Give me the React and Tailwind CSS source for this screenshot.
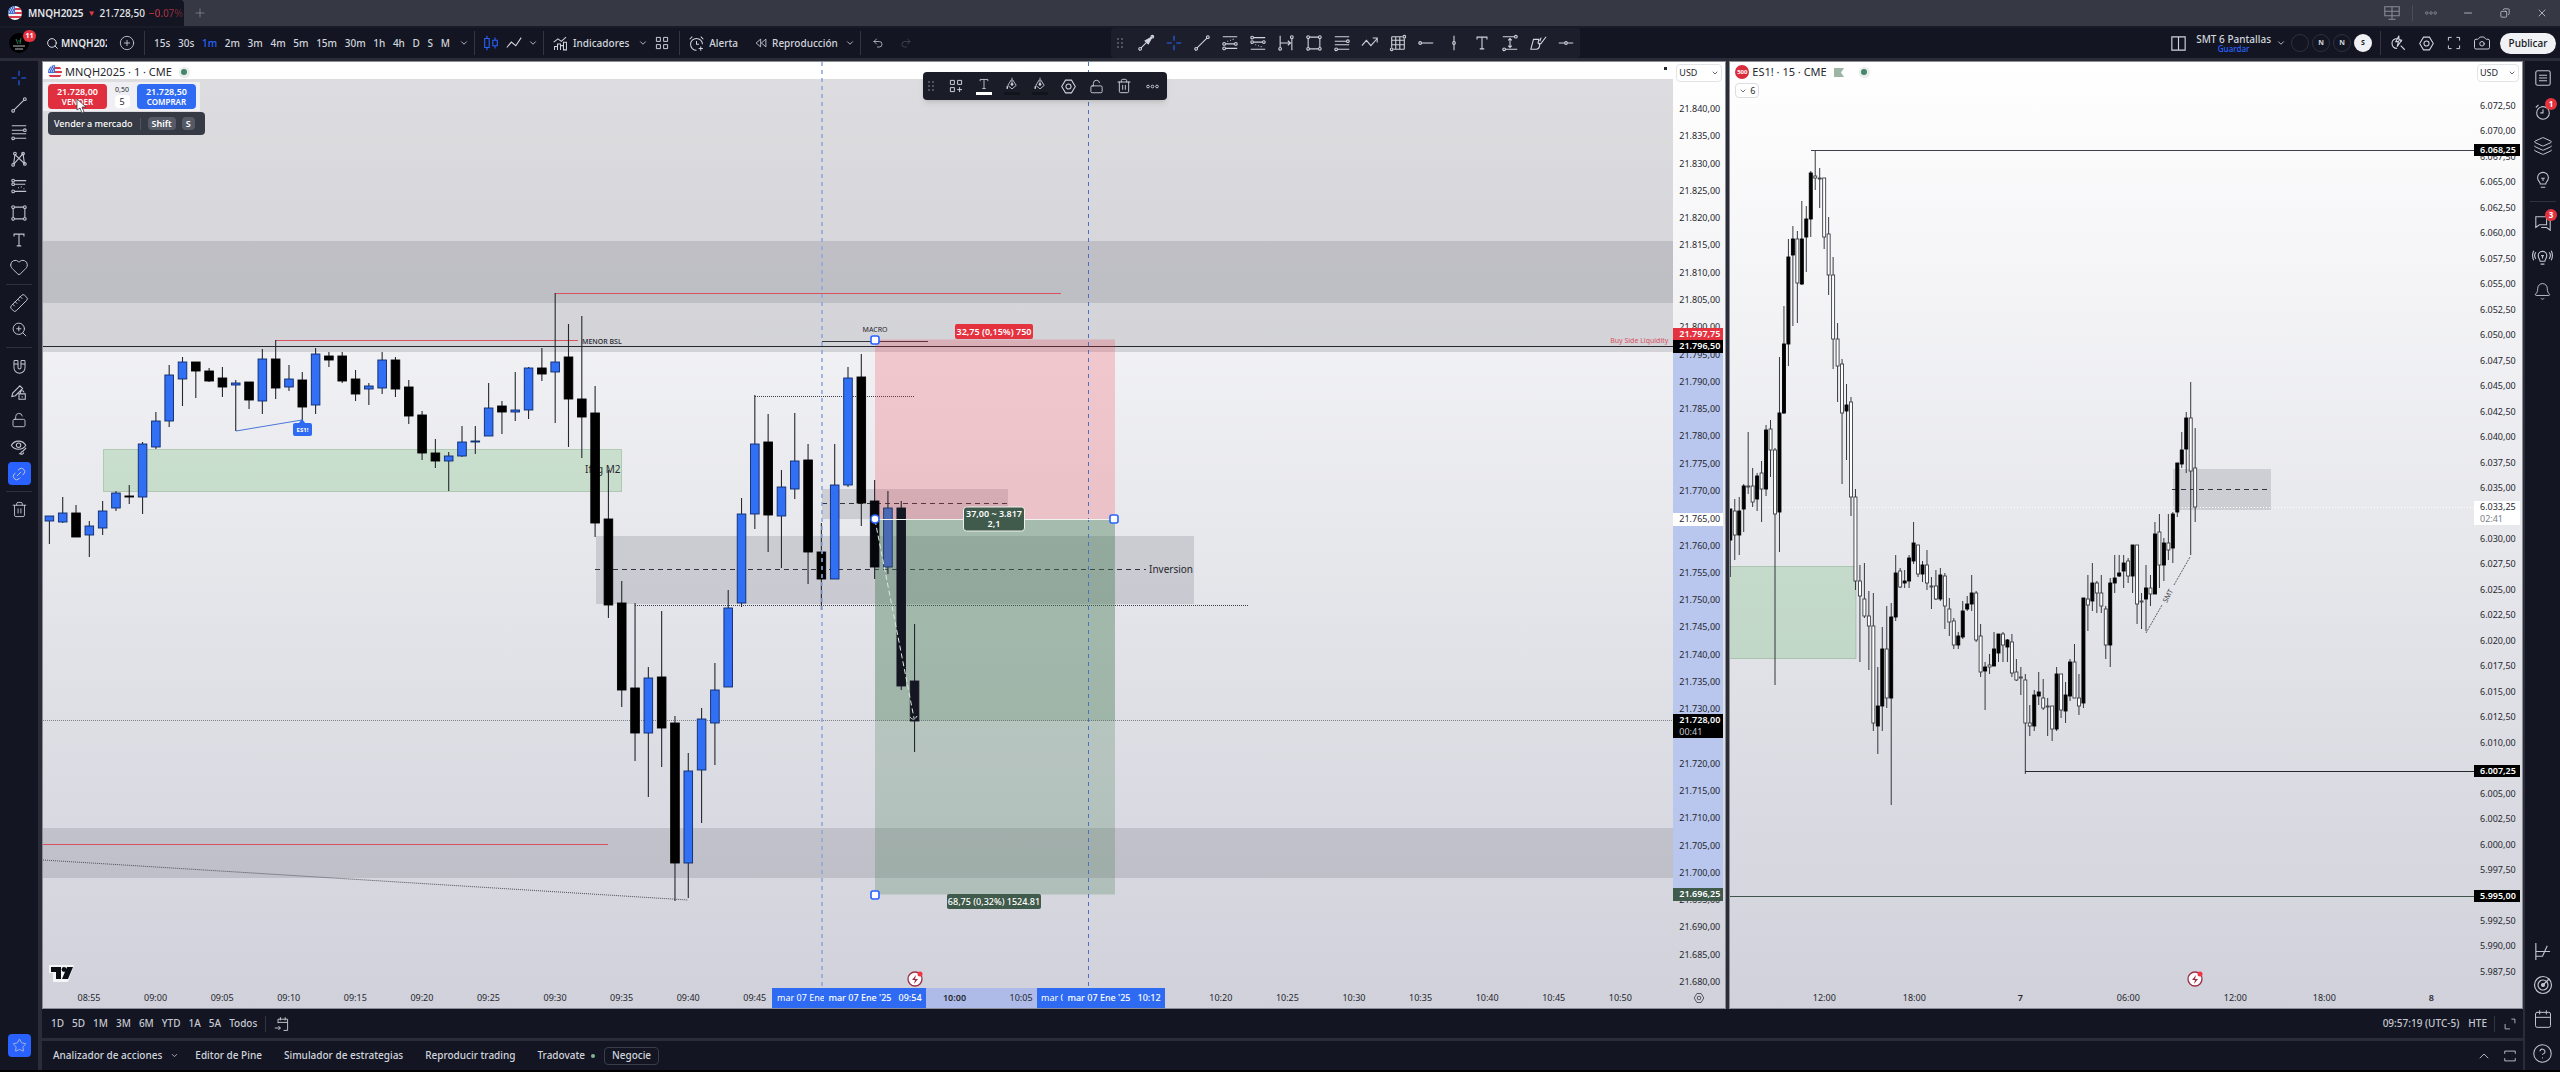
import React from "react";
import {
  Bell,
  Calendar,
  Camera,
  ChevronDown,
  ChevronUp,
  CircleHelp,
  CirclePlus,
  Copy,
  Heart,
  Layers,
  Link2,
  LockOpen,
  Magnet,
  Minus,
  Plus,
  Redo2,
  Ruler,
  Search,
  Star,
  Trash2,
  Undo2,
  X,
  ZoomIn,
} from "lucide-react";

// [direction, high, body top, body bottom, low]
const NQ_CANDLES = [
  ["u", 516, 516, 521, 544], ["u", 497, 513, 522, 523], ["d", 505, 513, 537, 537], ["u", 521, 526, 535, 557],
  ["u", 501, 511, 528, 535], ["u", 491, 493, 508, 511], ["d", 485, 496, 497, 504], ["u", 442, 444, 497, 514],
  ["u", 412, 421, 447, 449], ["u", 365, 375, 421, 427], ["u", 357, 362, 379, 406], ["d", 362, 362, 371, 398],
  ["d", 368, 371, 381, 382], ["d", 367, 378, 387, 397], ["u", 380, 383, 385, 431], ["d", 382, 382, 400, 409],
  ["u", 349, 359, 401, 414], ["d", 340, 359, 388, 399], ["u", 365, 379, 387, 391], ["d", 372, 380, 407, 420],
  ["u", 348, 354, 405, 414], ["d", 352, 356, 360, 367], ["d", 352, 356, 381, 383], ["d", 370, 379, 394, 401],
  ["u", 383, 386, 389, 405], ["u", 352, 360, 388, 394], ["d", 357, 360, 389, 397], ["d", 380, 387, 416, 424],
  ["d", 411, 415, 453, 460], ["d", 439, 453, 461, 468], ["u", 452, 456, 461, 491], ["u", 426, 442, 456, 457],
  ["u", 426, 441, 442, 454], ["u", 383, 408, 436, 436], ["d", 401, 406, 412, 434], ["u", 372, 410, 412, 421],
  ["u", 367, 368, 410, 419], ["d", 348, 368, 374, 381], ["u", 293, 362, 372, 423], ["d", 324, 357, 399, 447],
  ["d", 316, 399, 417, 458], ["d", 386, 413, 523, 537], ["d", 470, 519, 605, 618], ["d", 581, 603, 690, 707],
  ["d", 603, 688, 733, 761], ["u", 667, 678, 733, 797], ["d", 611, 677, 728, 767], ["d", 716, 723, 863, 901],
  ["u", 753, 771, 863, 898], ["u", 708, 719, 770, 823], ["u", 663, 690, 723, 765], ["u", 590, 608, 687, 687],
  ["u", 498, 514, 603, 607], ["u", 395, 444, 514, 529], ["d", 414, 442, 515, 552], ["u", 470, 487, 516, 568],
  ["u", 413, 461, 489, 499], ["d", 444, 460, 552, 584], ["d", 523, 552, 579, 610], ["u", 444, 485, 579, 579],
  ["u", 367, 378, 485, 487], ["d", 354, 377, 503, 526], ["d", 480, 501, 567, 579], ["u", 491, 508, 567, 574],
  ["d", 501, 508, 686, 690], ["d", 624, 681, 721, 752],
];

const ES_CANDLES = [
  ["u", 509, 509, 540, 577], ["d", 499, 511, 535, 560], ["u", 497, 511, 535, 555], ["u", 484, 486, 509, 532],
  ["d", 432, 486, 487, 494], ["d", 468, 486, 502, 507], ["u", 473, 476, 499, 511], ["d", 461, 473, 489, 522],
  ["u", 425, 430, 489, 496], ["d", 420, 429, 450, 477], ["d", 448, 450, 514, 685], ["u", 357, 413, 512, 552],
  ["u", 306, 344, 413, 414], ["u", 239, 257, 344, 366], ["u", 226, 239, 255, 326], ["d", 231, 239, 283, 323],
  ["u", 201, 239, 284, 285], ["u", 206, 219, 237, 272], ["u", 171, 173, 219, 237], ["d", 151, 176, 178, 190],
  ["d", 168, 178, 179, 208], ["d", 178, 178, 237, 249], ["d", 217, 234, 275, 295], ["d", 257, 275, 339, 369],
  ["d", 323, 339, 366, 402], ["d", 359, 364, 413, 484], ["u", 384, 405, 411, 460], ["d", 397, 402, 497, 516],
  ["d", 489, 497, 581, 590], ["d", 565, 581, 596, 662], ["d", 563, 599, 616, 618], ["d", 591, 616, 626, 670],
  ["d", 593, 626, 723, 731], ["u", 667, 706, 726, 754], ["u", 627, 649, 706, 731], ["d", 606, 649, 698, 708],
  ["u", 603, 617, 698, 805], ["u", 555, 573, 617, 621], ["d", 568, 571, 587, 588], ["u", 570, 581, 583, 588],
  ["u", 555, 558, 581, 588], ["u", 522, 543, 561, 564], ["d", 545, 545, 574, 577], ["u", 561, 565, 574, 582],
  ["d", 550, 565, 583, 590], ["d", 577, 586, 587, 609], ["d", 570, 586, 599, 600], ["u", 568, 575, 599, 601],
  ["d", 573, 576, 606, 629], ["d", 598, 609, 622, 636], ["d", 618, 621, 645, 649], ["u", 632, 636, 645, 649],
  ["u", 601, 611, 637, 639], ["u", 596, 604, 609, 611], ["u", 575, 593, 604, 611], ["d", 591, 593, 640, 642],
  ["d", 624, 636, 672, 677], ["u", 662, 667, 671, 710], ["d", 654, 665, 667, 674], ["u", 632, 649, 666, 666],
  ["u", 634, 634, 653, 662], ["d", 632, 634, 645, 662], ["u", 639, 640, 647, 662], ["d", 634, 642, 673, 677],
  ["d", 659, 672, 680, 681], ["d", 667, 677, 678, 695], ["d", 674, 680, 723, 774], ["d", 705, 723, 726, 736],
  ["u", 690, 695, 726, 731], ["u", 672, 692, 696, 705], ["d", 679, 698, 708, 710], ["d", 698, 706, 707, 736],
  ["d", 706, 706, 729, 741], ["u", 667, 674, 729, 731], ["d", 674, 674, 710, 718], ["u", 682, 695, 711, 723],
  ["u", 659, 662, 696, 701], ["d", 644, 662, 698, 698], ["d", 674, 698, 706, 715], ["u", 598, 598, 703, 708],
  ["d", 575, 599, 605, 631], ["u", 563, 583, 601, 611], ["d", 581, 583, 593, 613], ["d", 575, 593, 606, 613],
  ["d", 606, 609, 645, 659], ["u", 578, 583, 645, 667], ["u", 555, 578, 583, 593], ["u", 555, 573, 576, 577],
  ["u", 555, 563, 571, 588], ["d", 558, 561, 576, 583], ["u", 545, 545, 576, 593], ["d", 545, 545, 604, 624],
  ["d", 593, 601, 602, 629], ["u", 565, 588, 599, 631], ["d", 575, 588, 594, 606], ["u", 522, 534, 594, 594],
  ["d", 514, 532, 565, 588], ["u", 538, 543, 565, 581], ["d", 514, 543, 550, 560], ["u", 512, 514, 548, 563],
  ["u", 463, 463, 512, 517], ["u", 432, 450, 464, 468], ["u", 412, 418, 449, 473], ["d", 382, 418, 471, 555],
  ["d", 428, 468, 507, 522],
];

const TIMEFRAMES = ["15s", "30s", "1m", "2m", "3m", "4m", "5m", "15m", "30m", "1h", "4h", "D", "S", "M"];
const RANGES = ["1D", "5D", "1M", "3M", "6M", "YTD", "1A", "5A", "Todos"];

const formatPrice = (value) => {
  const [whole, cents] = value.toFixed(2).split(".");
  return `${whole.slice(0, -3)}.${whole.slice(-3)},${cents}`;
};

const NQ_PRICES = Array.from({ length: 33 }, (_, i) => formatPrice(21840 - i * 5));
const ES_PRICES = Array.from({ length: 35 }, (_, i) => formatPrice(6072.5 - i * 2.5));
const NQ_TIMES = Array.from({ length: 24 }, (_, i) => {
  const minutes = 8 * 60 + 55 + i * 5;
  return `${String(Math.floor(minutes / 60)).padStart(2, "0")}:${String(minutes % 60).padStart(2, "0")}`;
});

// Scale labels that give way to a tag keep their slot but stay empty
const TAGGED = ["21.765,00", "21.725,00", "6.032,50", "6.007,50", "5.995,00", "09:50", "09:55", "10:10", "10:15"];

// Drawing-tool glyphs on a 20x20 grid
const GLYPHS = {
  cross: <path d="M10 2v5.500M10 12.500V18M2 10h5.500M12.500 10H18" />,
  trend: <><path d="M4.500 15.500 15.500 4.500" /><circle cx="3.500" cy="16.500" r="1.500" /><circle cx="16.500" cy="3.500" r="1.500" /></>,
  arrow: <><path d="M4.500 15.500 12 8" /><circle cx="3.500" cy="16.500" r="1.500" /><path d="M17 3 9 7.500l3.500 3.500z" fill="currentColor" /><circle cx="17" cy="3" r="1.500" /></>,
  fib: <><path d="M2 3h16M2 8h13M2 12h16M5 17h13" /><circle cx="16.500" cy="8" r="1.500" /><circle cx="3.500" cy="17" r="1.500" /></>,
  pattern: <><path d="m4 16 1.500-11L16 15 14.500 4 4 16" /><circle cx="3.500" cy="16.500" r="1.500" /><circle cx="5.500" cy="4" r="1.500" /><circle cx="14.500" cy="4" r="1.500" /><circle cx="16.500" cy="15.500" r="1.500" /></>,
  forecast: <><path d="M5 4h13M5 8h12M5 16h13" /><path d="M9 12h1M12 11h1M15 13h1" /><circle cx="3.500" cy="4" r="1.500" /><circle cx="3.500" cy="8" r="1.500" /><circle cx="3.500" cy="16" r="1.500" /></>,
  longPos: <><path d="M2 3h16M5 11h10M5 16h13" /><path d="M7 8h1M10 7h1M13 6h1" /><circle cx="3.500" cy="11" r="1.500" /><circle cx="16.500" cy="11" r="1.500" /><circle cx="3.500" cy="16" r="1.500" /></>,
  shortPos: <><path d="M5 4h13M5 9h10M2 17h16" /><path d="M7 12h1M10 13h1M13 14h1" /><circle cx="3.500" cy="4" r="1.500" /><circle cx="3.500" cy="9" r="1.500" /><circle cx="16.500" cy="9" r="1.500" /></>,
  rect: <><path d="M5 3.500h10M5 16.500h10M3.500 5v10M16.500 5v10" /><circle cx="3.500" cy="3.500" r="1.500" /><circle cx="16.500" cy="3.500" r="1.500" /><circle cx="3.500" cy="16.500" r="1.500" /><circle cx="16.500" cy="16.500" r="1.500" /></>,
  text: <path d="M4.500 6V3.500h11V6M10 3.500v13M7.500 16.500h5" />,
  range: <><path d="M3.500 2v13M16.500 5v13M4 10h11M12 7.500l3 2.500-3 2.500" /><circle cx="3.500" cy="16.500" r="1.500" /><circle cx="16.500" cy="3.500" r="1.500" /></>,
  zigzag: <path d="m1 13 5-6 5 6 7-8M13 4.500h5v5" />,
  grid: <><path d="M3 3h12M3 7h14M3 12h14M5 17h12M3 3v12M7.500 3v14M12 3v14M17 5v12" /><circle cx="17" cy="3" r="1.500" /><circle cx="3" cy="17" r="1.500" /></>,
  ray: <><path d="M5 10h13" /><circle cx="3.500" cy="10" r="1.500" /></>,
  vline: <><path d="M10 2v6.500M10 11.500V18" /><circle cx="10" cy="10" r="1.500" /></>,
  hline: <><path d="M2 10h6.500M11.500 10H18" /><circle cx="10" cy="10" r="1.500" /></>,
  priceRange: <><path d="M2 3h13M5 17h13M10 5v10M8 7l2-2 2 2M8 13l2 2 2-2" /><circle cx="16.500" cy="3" r="1.500" /><circle cx="3.500" cy="17" r="1.500" /></>,
  brush: <path d="M2 17 5 6h6l-1 4c3 1 2 7-2 7zM10 10l3 1 6-8M12 8l1.500-4" />,
  candles: <path d="M5.500 2v3M5.500 15v3M3 5h5v10H3zM14.500 4v3M14.500 13v3M12 7h5v6h-5z" />,
  line: <path d="m2 15 5-6 5 4 6-9" />,
  indicators: <path d="M3 17.500v-4h3.500v4M6.500 17.500v-7H10v7M10 17.500v-5h3.500v5M13.500 17.500v-9H17v9zM2 8.500l5-4 4 3 5.500-5" />,
  squares: <path d="M3 3h5v5H3zM12 3h5v5h-5zM3 12h5v5H3zM12 12h5v5h-5z" />,
  template: <path d="M3 3h5v5H3zM12 3h5v5h-5zM3 12h5v5H3zM14.500 11.500v6M11.500 14.500h6" />,
  alert: <path d="M17 11a7 7 0 1 0-7 7M10 7v4h3M2 5l3-3M15 2l3 3M15 13.500v5M12.500 16h5" />,
  alarm: <><circle cx="10" cy="11" r="7" /><path d="M10 7v4H7M2 5l3-3M15 2l3 3" /></>,
  rewind: <path d="M9.500 4.500 3 10l6.500 5.500zM17 4.500 10.500 10l6.500 5.500z" />,
  layout: <path d="M3 3h14v14H3zM10 3v14" />,
  bolt: <path d="M9 16a5.500 5.500 0 1 1 5-7.500M13 13l4.500 4.500M11 2 7.500 8.500h3L9 14l5-7h-3z" />,
  hex: <><path d="M6.500 2.500h7L18 10l-4.500 7.500h-7L2 10z" /><circle cx="10" cy="10" r="3" /></>,
  full: <path d="M3 7V3h4M13 3h4v4M17 13v4h-4M7 17H3v-4" />,
  bucket: <><path d="M10 1v8M9 4 4 12l6 5 6-5-5-8" /><circle cx="10" cy="10.500" r="1.500" fill="currentColor" /><path d="m3.500 13-.5 4" strokeWidth="2" /></>,
  dots: <><circle cx="4" cy="10" r="1.800" /><circle cx="10" cy="10" r="1.800" /><circle cx="16" cy="10" r="1.800" /></>,
  pencilLock: <><path d="m2 14 1-4 8-8 3 3-8 8zM10 11h7v6h-7zM11.500 11V9.500a2 2 0 0 1 4 0" /><path d="M13.500 13.500v1.500" /></>,
  eye: <><path d="M1.500 8C5 2 14 2 17.500 8 14 14 5 14 1.500 8z" /><circle cx="9.500" cy="8" r="2.500" /><path d="m18 11-4 4M14 15c-2 0-1.500 2-3 2.500 2 1 4.500 0 4-1.500" /></>,
  list: <path d="M4 2h12a2 2 0 0 1 2 2v12a2 2 0 0 1-2 2H4a2 2 0 0 1-2-2V4a2 2 0 0 1 2-2zM5.500 7h9M5.500 10h9M5.500 13h9" />,
  bulb: <path d="M7 14.500C7 12 4 11.500 4 7.500a6 6 0 0 1 12 0c0 4-3 4.500-3 7zM7.500 18h5M8 8h4M10 8v3" />,
  stream: <path d="M7.500 14C7.500 12 5.500 11 5.500 8a4.500 4.500 0 0 1 9 0c0 3-2 4-2 6zM8 17h4M10 8v3M8.500 8h3M3 4.500c-1.500 2-1.500 5 0 7M17 4.500c1.500 2 1.500 5 0 7M.800 3c-1.500 3-1.500 7 0 10M19.200 3c1.500 3 1.500 7 0 10" />,
  chat: <path d="M2 3h12v9H6l-4 3zM16 7h2v11l-4-3H8" />,
  dom: <path d="M3 1v18M3 10h15M3 15h7l5-11" />,
  radar: <><circle cx="10" cy="10" r="8.500" /><circle cx="10" cy="10" r="5" /><circle cx="10" cy="10" r="1.500" fill="currentColor" /><path d="m10 10 6-6" /></>,
  goto: <path d="M5 9V4h12v14h-5M8 1.500v4M14 1.500v4M5 8h12M1 15h7M5.500 12.500 8 15l-2.500 2.500" />,
  corners: <path d="M3 10v7h7M12 3h5v6" />,
  panel: <path d="M2.500 7V3h15v4M2.500 13v4h15v-4" />,
  monitor: <path d="M2 3h16v10H2zM10 3v14M6 17h8M2 8h16" />,
};

function Glyph({ name, size = 18 }) {
  return (
    <svg
      width={size}
      height={size}
      viewBox="0 0 20 20"
      fill="none"
      stroke="currentColor"
      strokeWidth="1.2"
      className="shrink-0 overflow-visible"
    >
      {GLYPHS[name]}
    </svg>
  );
}

function IconButton({ label, className = "", children }) {
  return (
    <button aria-label={label} className={`flex shrink-0 items-center justify-center ${className}`}>
      {children}
    </button>
  );
}

function Divider({ className = "" }) {
  return <span className={`h-6 w-px shrink-0 bg-[#33363f] ${className}`} />;
}

function Grip() {
  return (
    <span className="grid shrink-0 grid-cols-2 gap-[2px]">
      {[0, 1, 2, 3, 4, 5].map((i) => (
        <i key={i} className="size-[2px] bg-[#50535e]" />
      ))}
    </span>
  );
}

function UsFlag({ size }) {
  return (
    <svg width={size} height={size} viewBox="0 0 14 14" className="shrink-0">
      <clipPath id="flag-clip"><circle cx="7" cy="7" r="7" /></clipPath>
      <g clipPath="url(#flag-clip)">
        <rect width="14" height="14" fill="#f3f4f8" />
        <path d="M7 2h7v2H7zM7 6h7v2H7zM0 10h14v2H0z" fill="#d9394b" />
        <rect width="7" height="8" fill="#3f6fd0" />
        <path d="M1 2h1M3 2h1M5 2h1M2 4h1M4 4h1M1 6h1M3 6h1M5 6h1" stroke="#fff" />
      </g>
    </svg>
  );
}

function WindowTabs() {
  return (
    <header className="flex h-[26px] shrink-0 items-center bg-[#363843] text-[#8a8d97]">
      <button className="flex h-full w-[184px] items-center gap-1 rounded-tr bg-[#131622] pl-2 text-[10px] font-medium whitespace-nowrap text-[#e4e5ea]">
        <UsFlag size={14} />
        <span className="ml-[2px] font-semibold">MNQH2025</span>
        <span className="text-[8px] text-[#e5394b]">▼</span>
        <span>21.728,50</span>
        <span className="bg-linear-to-r from-[#e5394b] to-[#5c2330] bg-clip-text text-transparent">−0.07%</span>
      </button>
      <IconButton label="Nueva pestaña" className="ml-2 size-4"><Plus size={14} strokeWidth={1.25} /></IconButton>
      <div className="ml-auto flex items-center pr-[10px]">
        <IconButton label="Pantallas" className="w-6"><Glyph name="monitor" /></IconButton>
        <span className="mx-2 h-4 w-px bg-[#4b4e59]" />
        <IconButton label="Menú" className="w-5"><Glyph name="dots" size={14} /></IconButton>
        <IconButton label="Minimizar" className="ml-2 w-[37px] text-[#d1d4dc]"><Minus size={12} strokeWidth={1.5} /></IconButton>
        <IconButton label="Restaurar" className="w-[38px] text-[#d1d4dc]"><Copy size={10} strokeWidth={1.75} className="-scale-x-100" /></IconButton>
        <IconButton label="Cerrar" className="ml-[10px] w-4 text-[#d1d4dc]"><X size={12} strokeWidth={1.5} /></IconButton>
      </div>
    </header>
  );
}

const DRAW_TOOLS = [
  "arrow", "cross", "trend", "longPos", "shortPos", "range", "rect", "fib",
  "zigzag", "grid", "ray", "vline", "text", "priceRange", "brush", "hline",
];

function TopToolbar() {
  return (
    <div className="flex h-[30px] shrink-0 items-center bg-[#131622] text-[10px] font-medium whitespace-nowrap text-[#d1d4dc]">
      <button aria-label="Perfil" className="relative ml-[9px] size-5 rounded-full bg-black">
        <svg viewBox="0 0 20 20" className="size-5">
          <path d="M7 6l2 5M12 5l-1 6M9 8h3" stroke="#2c7a57" fill="none" />
          <path d="M4 13h12M6 16h8" stroke="#b9bbc2" />
        </svg>
        <span className="absolute -top-[3px] left-[14px] flex h-3 w-[13px] items-center justify-center rounded-full bg-[#e5323f] text-[7px] font-bold text-white">11</span>
      </button>
      <button className="ml-[17px] flex w-[61px] items-center gap-[2px] overflow-hidden font-semibold text-[#e4e5ea]">
        <Search size={13} strokeWidth={1.75} className="shrink-0" />
        MNQH2025
      </button>
      <IconButton label="Comparar" className="ml-3 w-4"><CirclePlus size={16} strokeWidth={1.25} /></IconButton>
      <Divider className="mx-[9px]" />
      <div className="flex w-[296px] items-center justify-between">
        {TIMEFRAMES.map((t) => (
          <button key={t} className={t === "1m" ? "text-[#2962ff]" : ""}>{t}</button>
        ))}
      </div>
      <IconButton label="Más intervalos" className="ml-1 w-5"><ChevronDown size={10} /></IconButton>
      <Divider />
      <IconButton label="Velas" className="ml-[7px] w-[18px] text-[#2962ff]"><Glyph name="candles" /></IconButton>
      <IconButton label="Línea" className="ml-[5px] w-[18px]"><Glyph name="line" /></IconButton>
      <IconButton label="Tipos de gráfico" className="w-5"><ChevronDown size={10} /></IconButton>
      <Divider />
      <button className="ml-2 flex items-center gap-1"><Glyph name="indicators" size={17} />Indicadores</button>
      <IconButton label="Favoritos" className="ml-1 w-5"><ChevronDown size={10} /></IconButton>
      <IconButton label="Plantillas" className="w-[18px]"><Glyph name="squares" size={16} /></IconButton>
      <Divider className="mx-2" />
      <button className="flex items-center gap-1"><Glyph name="alert" size={17} />Alerta</button>
      <button className="ml-4 flex items-center gap-1"><Glyph name="rewind" size={14} />Reproducción</button>
      <IconButton label="Opciones de reproducción" className="ml-[2px] w-5"><ChevronDown size={10} /></IconButton>
      <Divider />
      <IconButton label="Deshacer" className="ml-[9px] w-4"><Undo2 size={12} strokeWidth={1.5} /></IconButton>
      <IconButton label="Rehacer" className="ml-3 w-4 text-[#4a4d58]"><Redo2 size={12} strokeWidth={1.5} /></IconButton>
      <div className="ml-[197px] flex h-full items-center rounded bg-[#1c1f2b] pl-1.5">
        <Grip />
        <div className="ml-[9px] flex">
          {DRAW_TOOLS.map((tool) => (
            <IconButton key={tool} label={tool} className={tool === "cross" ? "w-7 text-[#2962ff]" : "w-7"}>
              <Glyph name={tool} />
            </IconButton>
          ))}
        </div>
      </div>
      <div className="ml-auto flex items-center pr-1">
        <IconButton label="Disposición" className="w-5"><Glyph name="layout" size={19} /></IconButton>
        <button className="ml-2 flex flex-col items-center text-[10px] leading-[10px]">
          SMT 6 Pantallas
          <span className="text-[8px] leading-[9px] text-[#2962ff]">Guardar</span>
        </button>
        <IconButton label="Diseños" className="w-5"><ChevronDown size={10} /></IconButton>
        <div className="flex gap-[3px] text-[7px] font-bold">
          <span className="size-[18px] rounded-full border border-[#2e313c]" />
          <span className="flex size-[18px] items-center justify-center rounded-full border border-[#2e313c]">N</span>
          <span className="flex size-[18px] items-center justify-center rounded-full border border-[#2e313c]">N</span>
          <span className="flex size-[18px] items-center justify-center rounded-full bg-[#f0f1f4] text-[#131622]">S</span>
        </div>
        <Divider className="ml-2 mr-[3px]" />
        <IconButton label="Búsqueda rápida" className="w-7"><Glyph name="bolt" /></IconButton>
        <IconButton label="Configuración" className="w-7"><Glyph name="hex" size={17} /></IconButton>
        <IconButton label="Pantalla completa" className="w-7"><Glyph name="full" size={16} /></IconButton>
        <IconButton label="Captura" className="w-7"><Camera size={18} strokeWidth={1.25} /></IconButton>
        <button className="ml-1 h-[21px] w-14 rounded-full bg-[#f0f1f4] text-[#131622]">Publicar</button>
      </div>
    </div>
  );
}

function Separator() {
  return <span className="my-1 h-px w-[26px] shrink-0 bg-[#2f323d]" />;
}

function LeftSidebar() {
  const tool = "h-[27px] w-full";
  return (
    <nav className="flex w-[38px] shrink-0 flex-col items-center bg-[#131622] pt-[3px] text-[#c1c4cd]">
      <IconButton label="Cruz" className="h-[27px] w-full text-[#2962ff]"><Glyph name="cross" /></IconButton>
      {["trend", "fib", "pattern", "forecast", "rect", "text"].map((name) => (
        <IconButton key={name} label={name} className={tool}><Glyph name={name} /></IconButton>
      ))}
      <IconButton label="Iconos" className={tool}><Heart size={20} strokeWidth={1.2} /></IconButton>
      <Separator />
      <IconButton label="Medir" className={tool}><Ruler size={20} strokeWidth={1.2} className="-rotate-90" /></IconButton>
      <IconButton label="Acercar" className={tool}><ZoomIn size={17} strokeWidth={1.4} /></IconButton>
      <Separator />
      <IconButton label="Imán" className={tool}><Magnet size={17} strokeWidth={1.4} className="rotate-[135deg]" /></IconButton>
      <IconButton label="Modo de dibujo" className={tool}><Glyph name="pencilLock" /></IconButton>
      <IconButton label="Bloquear" className={tool}><LockOpen size={16} strokeWidth={1.4} /></IconButton>
      <IconButton label="Ocultar" className={tool}><Glyph name="eye" /></IconButton>
      <IconButton label="Sincronizar" className={tool}>
        <span className="flex size-[23px] items-center justify-center rounded bg-[#2962ff]">
          <Link2 size={16} strokeWidth={1.4} className="-rotate-45" />
        </span>
      </IconButton>
      <Separator />
      <IconButton label="Eliminar" className={tool}><Trash2 size={17} strokeWidth={1.3} /></IconButton>
      <IconButton label="Herramientas favoritas" className="mt-auto mb-[13px] size-[23px] rounded bg-[#2962ff]">
        <Star size={15} strokeWidth={1.3} />
      </IconButton>
    </nav>
  );
}

function Badge({ children }) {
  return (
    <span className="absolute top-[3px] right-[3px] flex size-3 items-center justify-center rounded-full bg-[#e5323f] text-[8px] font-bold text-white">
      {children}
    </span>
  );
}

function RightSidebar() {
  const item = "relative h-[34px] w-full";
  return (
    <nav className="flex w-[35px] shrink-0 flex-col items-center bg-[#131622] text-[#c1c4cd]">
      <IconButton label="Lista" className={item}><Glyph name="list" /></IconButton>
      <IconButton label="Alertas" className={item}><Glyph name="alarm" /><Badge>1</Badge></IconButton>
      <IconButton label="Árbol de objetos" className={item}><Layers size={20} strokeWidth={1.2} /></IconButton>
      <IconButton label="Ideas" className={item}><Glyph name="bulb" /></IconButton>
      <Separator />
      <IconButton label="Chats" className={item}><Glyph name="chat" /><Badge>3</Badge></IconButton>
      <IconButton label="Transmisiones" className={item}><Glyph name="stream" size={19} /></IconButton>
      <IconButton label="Notificaciones" className={item}><Bell size={19} strokeWidth={1.2} /></IconButton>
      <div className="mt-auto w-full">
        <IconButton label="DOM" className={item}><Glyph name="dom" size={19} /></IconButton>
        <IconButton label="Analizadores" className={item}><Glyph name="radar" size={20} /></IconButton>
        <IconButton label="Calendario" className={item}><Calendar size={20} strokeWidth={1.2} /></IconButton>
        <IconButton label="Ayuda" className={item}><CircleHelp size={21} strokeWidth={1.2} /></IconButton>
      </div>
    </nav>
  );
}

function Handle({ x, y, round }) {
  return <rect x={x - 4} y={y - 4} width="8" height="8" rx={round ? 4 : 2} fill="#fff" stroke="#2962ff" strokeWidth="1.6" />;
}

function EventMark({ x, y }) {
  return (
    <g>
      <circle cx={x} cy={y} r="7" fill="#fff" stroke="#9b2f45" strokeWidth="1.3" />
      <path d={`M${x + 1} ${y - 4}l-4 5h3l-1 4 4-5h-3z`} fill="#9b2f45" />
      <circle cx={x + 5} cy={y - 5} r="2.500" fill="#f23645" />
    </g>
  );
}

function NqCandle({ candle, index, up, upBorder, down }) {
  const [dir, high, top, bottom, low] = candle;
  const x = 49.4 + index * 13.31;
  return (
    <g>
      <path d={`M${x} ${high}V${low}`} stroke="#26282f" strokeWidth="1.1" />
      <rect
        x={x - 4.3}
        y={top}
        width="8.600"
        height={Math.max(bottom - top, 0.5)}
        fill={dir === "u" ? up : down}
        stroke={dir === "u" ? upBorder : down}
        strokeWidth="0.9"
      />
    </g>
  );
}

// Candles from this index on sit inside the short position
const POSITION_START = 62;

function NqCanvas() {
  const zone = "rgba(115,118,128,0.24)";
  return (
    <svg className="absolute inset-0 size-full">
      <g transform="translate(-43 -62)">
        <rect x="43" y="79" width="4000" height="273" fill={zone} />
        <rect x="43" y="241" width="4000" height="62" fill={zone} />
        <rect x="43" y="828" width="4000" height="50" fill={zone} />
        <rect x="103.500" y="449.500" width="518" height="42" fill="rgba(76,175,80,0.21)" stroke="rgba(76,140,80,0.3)" />
        <rect x="596" y="536" width="598" height="68" fill={zone} />
        <rect x="822" y="489" width="186" height="30" fill={zone} />
        <text x="585" y="473" fontSize="10" fill="#26282f">Ifvg M2</text>

        <path d="M555 293.500H1061M276 340.500H578M43 844.500H608" stroke="#d9515f" />
        <path d="M43 860 688 900" stroke="#4c4f57" strokeDasharray="1 1" />
        <path d="M755 396.500H915M635 605.500H1248" stroke="#3d4049" strokeDasharray="1 1" />
        <path d="M43 720.500H4000" stroke="#7d8088" strokeDasharray="1 1" />
        <path d="M43 346.500H4000" stroke="#26282f" strokeWidth="1.200" />
        <path d="M822 341.500H928" stroke="#32353f" />
        <path d="M236 431 302 420" stroke="#4a74d8" />
        <path d="M595 569.500H1146M822 503.500H1007" stroke="#32353f" strokeDasharray="5 4" />

        {NQ_CANDLES.slice(0, POSITION_START).map((candle, i) => (
          <NqCandle key={i} candle={candle} index={i} up="#3170f5" upBorder="#0e2a6b" down="#000" />
        ))}

        <path d="M302 419l4 5h-8z" fill="#2f6bf2" />
        <rect x="293" y="423" width="19" height="13" rx="2" fill="#2f6bf2" />
        <text x="302.500" y="432" fontSize="6" fontWeight="700" fill="#fff" textAnchor="middle">ES1!</text>
        <path d="M822 62V988" stroke="#8fa6dc" strokeWidth="1.600" strokeDasharray="4 4" />

        <rect x="875" y="339.500" width="240" height="180" fill="rgba(242,54,69,0.22)" />
        <rect x="875" y="519.500" width="240" height="375" fill="rgba(66,120,80,0.25)" />
        <rect x="875" y="519.500" width="240" height="201" fill="rgba(66,120,80,0.2)" />
        {NQ_CANDLES.slice(POSITION_START).map((candle, i) => (
          <NqCandle
            key={i}
            candle={candle}
            index={POSITION_START + i}
            up="#4a6ab5"
            upBorder="#1d3262"
            down={i === 0 ? "#06070c" : "#141722"}
          />
        ))}
        <path d="M1088.500 62V988" stroke="#4a6fc4" strokeDasharray="4 4" />
        <path d="M875 519.500H1114" stroke="#f0f2f0" strokeWidth="1.200" />
        <path d="M875 520 914 718" stroke="#dfe8e0" strokeDasharray="5 3" />
        <path d="M910 717c2 3 5 3 7-1" stroke="#dfe8e0" fill="none" />

        <text x="582" y="344" fontSize="7" fontWeight="500" fill="#26282f">MENOR BSL</text>
        <text x="875" y="332" fontSize="7" fill="#26282f" textAnchor="middle">MACRO</text>
        <text x="1149" y="573" fontSize="10" fill="#26282f">Inversion</text>

        <g fontSize="9" fontWeight="600" fill="#fff" textAnchor="middle">
          <rect x="955" y="324" width="78" height="15" rx="2" fill="#e5323f" />
          <text x="994" y="335">32,75 (0,15%) 750</text>
          <rect x="963.500" y="507" width="61" height="24" rx="3" fill="#405a4b" stroke="#eef2ef" />
          <text x="994" y="517">37,00 ~ 3.817</text>
          <text x="994" y="527">2,1</text>
          <rect x="947" y="894" width="94" height="15" rx="2" fill="#405a4b" />
          <text x="994" y="905" fontWeight="500">68,75 (0,32%) 1524.81</text>
        </g>

        <Handle x={875} y={340} />
        <Handle x={875} y={519} round />
        <Handle x={1114} y={519} />
        <Handle x={875} y={895} />
        <EventMark x={915} y={979} />

        <path d="M49 965h25l-6 17h-15v-9h-4z" fill="#f4f4f7" />
        <path d="M51 967h10v12h-5v-7h-5zM67 967h6l-5 12h-6z" fill="#0c0e15" />
        <circle cx="64" cy="969.500" r="2.400" fill="#0c0e15" />
      </g>
    </svg>
  );
}

function EsCanvas() {
  return (
    <svg className="absolute inset-0 size-full">
      <g transform="translate(-1730 -62)">
        <rect x="1729" y="566.500" width="127" height="92" fill="rgba(76,175,80,0.21)" stroke="rgba(76,140,80,0.3)" />
        <rect x="2173" y="469" width="98" height="41" fill="rgba(115,118,128,0.24)" />
        <path d="M2172 489.500H2268" stroke="#32353f" strokeDasharray="5 4" />
        <path d="M1729 507.500H4000" stroke="#fff" strokeDasharray="1 2" />
        <path d="M1811 150.500H4000" stroke="#3d4049" strokeWidth="1.200" />
        <path d="M2025 771.500H4000" stroke="#26282f" strokeWidth="1.200" />
        <path d="M1729 896.500H4000" stroke="#3f5348" strokeWidth="1.200" />
        {ES_CANDLES.map(([dir, high, top, bottom, low], i) => {
          const x = 1730.3 + i * 4.47;
          return (
            <g key={i} stroke="#22242b">
              <path d={`M${x} ${high}V${low}`} strokeWidth="0.900" />
              <rect
                x={x - 1.5}
                y={top}
                width="3"
                height={Math.max(bottom - top, 0.5)}
                fill={dir === "u" ? "#000" : "#fff"}
                stroke={dir === "u" ? "#000" : "#3a3c44"}
                strokeWidth="0.900"
              />
            </g>
          );
        })}
        <path d="M2146 633 2162 605M2174 585 2190 557" stroke="#5c5f68" strokeDasharray="2 1" />
        <text transform="translate(2170 597) rotate(-62)" fontSize="7" fill="#3a3d47" textAnchor="middle">SMT</text>
        <EventMark x={2195} y={979} />
      </g>
    </svg>
  );
}

function CurrencySelect({ id }) {
  return (
    <label htmlFor={id} className="relative mx-[3px] mt-[2px] block h-[18px] rounded-sm border border-[#e3e4e8] bg-white/70">
      <select id={id} aria-label="Moneda" className="h-full w-full appearance-none pl-[2px] text-[9px] leading-4 text-[#26282f]">
        <option>USD</option>
      </select>
      <ChevronDown size={8} className="absolute top-1 right-[2px] text-[#131622]" />
    </label>
  );
}

function PriceTag({ className, children }) {
  return (
    <span className={`absolute left-0 right-[2px] pl-1.5 text-[9px] leading-3 ${className}`}>{children}</span>
  );
}

function PriceScale({ prices }) {
  return prices.map((price) => (
    <span key={price} className="h-3">{TAGGED.includes(price) ? "" : price}</span>
  ));
}

function ChartTitle({ icon, children }) {
  return (
    <div className="flex h-5 items-center gap-[3px] text-[11px] text-[#26282f]">
      {icon}
      {children}
    </div>
  );
}

function StatusDot() {
  return (
    <span className="flex size-[11px] items-center justify-center rounded-full bg-[#e9eceb]">
      <i className="size-[6px] rounded-full bg-[#45866a]" />
    </span>
  );
}

function TradePanel() {
  return (
    <>
      <div className="flex h-[29px] w-[157px] items-center bg-[#f0f0f4] pl-[5px] text-center text-[9px] leading-[11px] font-semibold text-white">
        <button className="h-[25px] w-[59px] rounded bg-[#e0303f]">
          21.728,00
          <span className="block text-[8px] leading-[10px]">VENDER</span>
        </button>
        <div className="flex w-[30px] flex-col items-center text-[#26282f]">
          <span className="text-[7px] leading-[10px] font-normal">0,50</span>
          <input
            aria-label="Cantidad"
            defaultValue="5"
            className="h-[13px] w-[15px] rounded-sm bg-white text-center text-[9px] font-normal"
          />
        </div>
        <button className="h-[25px] w-[59px] rounded bg-[#2f6bf2]">
          21.728,50
          <span className="block text-[8px] leading-[10px]">COMPRAR</span>
        </button>
      </div>
      <svg width="12" height="16" viewBox="0 0 12 16" className="absolute top-[36px] left-[33px]">
        <path d="M1 1v11l3-2 2 5 2-1-2-5h4z" fill="#fff" stroke="#3a3d47" strokeWidth="0.800" />
      </svg>
      <div className="mt-px ml-[5px] flex h-[23px] w-[157px] items-center rounded bg-[#363a45] pl-1.5 text-[9px] font-medium whitespace-nowrap text-white">
        Vender a mercado
        <span className="mx-[7px] h-3 w-px bg-[#50535e]" />
        <kbd className="rounded-sm bg-[#565a66] px-1 font-sans text-[9px] leading-[13px] font-semibold">Shift</kbd>
        <kbd className="ml-1.5 rounded-sm bg-[#565a66] px-1 font-sans text-[9px] leading-[13px] font-semibold">S</kbd>
      </div>
    </>
  );
}

function SelectionToolbar() {
  return (
    <div className="absolute top-[10px] left-[880px] flex h-7 w-[244px] items-center rounded bg-[#1a1d28] pl-[5px] text-[#d1d4dc] shadow-md">
      <Grip />
      <div className="ml-2 flex">
        <IconButton label="Plantilla" className="w-7"><Glyph name="template" size={16} /></IconButton>
        <button aria-label="Color del texto" className="flex w-7 flex-col items-center gap-px">
          <Glyph name="text" size={14} />
          <i className="h-[3px] w-4 bg-white" />
        </button>
        <button aria-label="Color de beneficio" className="flex w-7 flex-col items-center gap-px">
          <Glyph name="bucket" size={14} />
          <i className="h-[3px] w-4 bg-[#12141b]" />
        </button>
        <button aria-label="Color de pérdida" className="flex w-7 flex-col items-center gap-px">
          <Glyph name="bucket" size={14} />
          <i className="h-[3px] w-4 bg-[#12141b]" />
        </button>
        <IconButton label="Ajustes" className="w-7"><Glyph name="hex" size={17} /></IconButton>
        <IconButton label="Bloquear" className="w-7"><LockOpen size={15} strokeWidth={1.4} /></IconButton>
        <IconButton label="Eliminar" className="w-7"><Trash2 size={16} strokeWidth={1.4} /></IconButton>
        <IconButton label="Más" className="w-7"><Glyph name="dots" size={15} /></IconButton>
      </div>
    </div>
  );
}

function NqChart() {
  return (
    <section className="flex min-w-0 flex-[17] border border-[#8b8d96] bg-linear-to-b from-white to-[#d0d1da]">
      <div className="flex min-w-0 flex-1 flex-col">
        <div className="relative flex-1 overflow-hidden">
          <NqCanvas />
          <div className="relative">
            <div className="pl-[5px]">
              <ChartTitle icon={<UsFlag size={14} />}>
                MNQH2025 · 1 · CME
                <span className="ml-1"><StatusDot /></span>
              </ChartTitle>
            </div>
            <TradePanel />
          </div>
          <SelectionToolbar />
          <i className="absolute top-[5px] right-[6px] size-[3px] bg-[#26282f]" />
        </div>
        <div className="relative flex h-5 shrink-0 items-center justify-between pr-[33px] pl-[26px] text-[9px] text-[#26282f]">
          <span className="absolute inset-y-0 left-[832px] w-[240px] bg-[#aebbe8]" />
          {NQ_TIMES.map((t) => (
            <span key={t} className={t === "10:00" ? "relative w-10 text-center font-semibold" : "relative w-10 text-center"}>
              {TAGGED.includes(t) ? "" : t}
            </span>
          ))}
          <span className="absolute inset-y-0 left-[729px] w-[52px] bg-[#2f6bf2] pl-[5px] leading-5 whitespace-nowrap text-white">mar 07 Ene</span>
          <span className="absolute inset-y-0 left-[781px] w-[102px] bg-[#2f6bf2] text-center font-medium leading-5 whitespace-pre text-white">mar 07 Ene '25   09:54</span>
          <span className="absolute inset-y-0 left-[994px] w-[27px] bg-[#2f6bf2] pl-1 leading-5 whitespace-nowrap text-white">mar 0</span>
          <span className="absolute inset-y-0 left-[1020px] w-[102px] bg-[#2f6bf2] text-center font-medium leading-5 whitespace-pre text-white">mar 07 Ene '25   10:12</span>
        </div>
      </div>
      <div className="relative flex w-[52px] shrink-0 flex-col text-[9px] leading-3 text-[#26282f]">
        <span className="absolute top-[291px] right-[2px] left-0 h-[541px] bg-[#b9c6ee]" />
        <CurrencySelect id="nq-currency" />
        <div className="relative mt-[21px] flex flex-1 flex-col justify-between pl-1.5">
          <PriceScale prices={NQ_PRICES} />
        </div>
        <IconButton label="Ajustes de escala" className="h-5 shrink-0"><Glyph name="hex" size={12} /></IconButton>
        <PriceTag className="top-[266px] bg-[#e5323f] font-semibold text-white">21.797,75</PriceTag>
        <PriceTag className="top-[278px] bg-black pb-px font-semibold text-white">21.796,50</PriceTag>
        <PriceTag className="top-[451px] bg-white pb-px">21.765,00</PriceTag>
        <PriceTag className="top-[652px] bg-black font-semibold text-white">
          21.728,00
          <span className="block font-normal text-[#c5c8d0]">00:41</span>
        </PriceTag>
        <PriceTag className="top-[826px] bg-[#405a4b] pb-px font-semibold text-white">21.696,25</PriceTag>
        <span className="absolute top-[279px] right-[57px] -translate-y-1/2 text-[7px] leading-3 whitespace-nowrap text-[#d9515f]">Buy Side Liquidity</span>
      </div>
    </section>
  );
}

function EsChart() {
  return (
    <section className="flex min-w-0 flex-[8] border border-[#8b8d96] bg-linear-to-b from-white to-[#d0d1da]">
      <div className="flex min-w-0 flex-1 flex-col">
        <div className="relative flex-1 overflow-hidden">
          <EsCanvas />
          <div className="relative pl-[5px]">
            <ChartTitle
              icon={<span className="flex size-[14px] items-center justify-center rounded-full bg-[#d92c3c] text-[6px] font-bold text-white">500</span>}
            >
              ES1! · 15 · CME
              <svg width="10" height="9" viewBox="0 0 10 9" className="ml-1">
                <path d="M0 0h10L7 4.500 10 9H0z" fill="#9db5a5" />
              </svg>
              <span className="ml-3"><StatusDot /></span>
            </ChartTitle>
            <button className="mt-px flex h-[15px] w-6 items-center justify-center gap-[3px] rounded-sm border border-[#dcdde2] bg-white text-[9px] text-[#26282f]">
              <ChevronDown size={8} />6
            </button>
          </div>
        </div>
        <div className="flex h-5 shrink-0 items-center overflow-hidden pl-[49px] text-center text-[9px] text-[#26282f]">
          <span className="w-[90px] shrink-0">12:00</span>
          <span className="w-[90px] shrink-0">18:00</span>
          <span className="w-[122px] shrink-0 font-semibold">7</span>
          <span className="w-[94px] shrink-0">06:00</span>
          <span className="w-[120px] shrink-0">12:00</span>
          <span className="w-[58px] shrink-0">18:00</span>
          <span className="w-[156px] shrink-0 font-semibold">8</span>
        </div>
      </div>
      <div className="relative flex w-[48px] shrink-0 flex-col pb-[30px] text-[9px] leading-3 text-[#26282f]">
        <CurrencySelect id="es-currency" />
        <div className="mt-[18px] flex flex-1 flex-col justify-between pl-1.5">
          <PriceScale prices={ES_PRICES} />
        </div>
        <PriceTag className="top-[82px] bg-black font-semibold text-white">6.068,25</PriceTag>
        <PriceTag className="top-[439px] bg-white">
          6.033,25
          <span className="block text-[#7d8088]">02:41</span>
        </PriceTag>
        <PriceTag className="top-[703px] bg-black font-semibold text-white">6.007,25</PriceTag>
        <PriceTag className="top-[828px] bg-black font-semibold text-white">5.995,00</PriceTag>
      </div>
    </section>
  );
}

function RangeBar() {
  return (
    <div className="flex h-[29px] shrink-0 items-center bg-[#131622] pl-[9px] text-[10px] font-medium text-[#c5c8d0]">
      <div className="flex gap-2">
        {RANGES.map((r) => <button key={r}>{r}</button>)}
      </div>
      <span className="mx-2 h-4 w-px bg-[#33363f]" />
      <IconButton label="Ir a" className="w-4"><Glyph name="goto" size={16} /></IconButton>
      <div className="ml-auto flex items-center pr-[5px]">
        <button>09:57:19 (UTC-5)</button>
        <button className="ml-[9px]">HTE</button>
        <span className="mx-[7px] h-4 w-px bg-[#33363f]" />
        <IconButton label="Ajustar" className="w-4"><Glyph name="corners" size={14} /></IconButton>
      </div>
    </div>
  );
}

function PanelTabs() {
  return (
    <div className="flex h-[29px] shrink-0 items-center bg-[#131622] pl-[11px] text-[10px] font-medium whitespace-nowrap text-[#d1d4dc]">
      <button className="flex items-center gap-2">Analizador de acciones<ChevronDown size={9} /></button>
      <button className="ml-4">Editor de Pine</button>
      <button className="ml-[22px]">Simulador de estrategias</button>
      <button className="ml-[22px]">Reproducir trading</button>
      <button className="ml-[22px] flex items-center gap-1.5">
        Tradovate
        <i className="size-1 rounded-full bg-[#7fb394]" />
      </button>
      <button className="ml-[9px] h-[18px] w-[55px] rounded border border-[#3a3d47]">Negocie</button>
      <div className="ml-auto flex items-center pr-[5px]">
        <IconButton label="Expandir panel" className="w-6"><ChevronUp size={16} strokeWidth={1.25} /></IconButton>
        <IconButton label="Maximizar panel" className="ml-1.5 w-4"><Glyph name="panel" size={14} /></IconButton>
      </div>
    </div>
  );
}

function App() {
  return (
    <div className="flex h-screen flex-col overflow-hidden bg-[#2a2d38] font-['Noto_Sans','Open_Sans',sans-serif]">
      <WindowTabs />
      <div className="h-[2px] shrink-0 bg-[#191c27]" />
      <TopToolbar />
      <div className="flex min-h-0 flex-1 pt-[3px]">
        <LeftSidebar />
        <main className="ml-1 flex min-w-0 flex-1 flex-col">
          <div className="flex min-h-0 flex-1 gap-[3px]">
            <NqChart />
            <EsChart />
          </div>
          <RangeBar />
          <div className="h-[3px] shrink-0" />
          <PanelTabs />
        </main>
        <div className="w-[2px] shrink-0" />
        <RightSidebar />
      </div>
      <div className="h-[2px] shrink-0 bg-black" />
    </div>
  );
}

export default App;
